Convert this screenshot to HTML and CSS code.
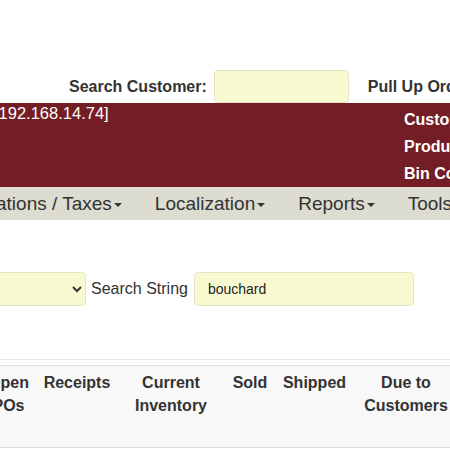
FILE: index.html
```html
<!DOCTYPE html>
<html>
<head>
<meta charset="utf-8">
<link rel="stylesheet" href="styles.css">
</head>
<body>
<div class="page">
  <div class="topbar">
    <label class="lbl" for="cust">Search Customer:</label>
    <input class="yinput cust" id="cust" type="text">
    <span class="lbl pull">Pull Up Order:</span>
  </div>
  <header class="brand">
    <div class="user">[192.168.14.74]</div>
    <ul class="quick">
      <li>Customers</li>
      <li>Products</li>
      <li>Bin Codes</li>
    </ul>
  </header>
  <nav class="mainnav">
    <ul>
      <li>Specifications / Taxes<span class="caret"></span></li>
      <li>Localization<span class="caret"></span></li>
      <li>Reports<span class="caret"></span></li>
      <li>Tools<span class="caret"></span></li>
    </ul>
  </nav>
  <form class="search">
    <select class="yinput field"><option></option></select>
    <label class="slabel">Search String</label>
    <input class="yinput sinput" type="text" value="bouchard">
  </form>
  <div class="results">
    <table class="grid">
      <colgroup>
        <col class="c1"><col class="c2"><col class="c3"><col class="c4"><col class="c5"><col class="c6"><col class="c7">
      </colgroup>
      <thead>
        <tr>
          <th>Open<br>POs</th>
          <th>Receipts</th>
          <th>Current<br>Inventory</th>
          <th>Sold</th>
          <th>Shipped</th>
          <th>Due to<br>Customers</th>
          <th>Other</th>
        </tr>
      </thead>
    </table>
  </div>
</div>
</body>
</html>
```
FILE: styles.css
```css
html, body {
  margin: 0;
  padding: 0;
  background: #fff;
}
body {
  width: 450px;
  height: 450px;
  overflow: hidden;
  font-family: "Liberation Sans", Arial, sans-serif;
  color: #333;
}
.page {
  width: 640px;
}
.topbar {
  height: 103px;
  display: flex;
  align-items: flex-end;
  padding-left: 69px;
  white-space: nowrap;
}
.lbl {
  font-weight: bold;
  font-size: 16px;
  line-height: 33px;
}
.yinput {
  box-sizing: border-box;
  background: #fafad2;
  border: 1px solid #e3e3c6;
  border-radius: 4px;
  font-family: "Liberation Sans", Arial, sans-serif;
  color: #333;
}
.cust {
  width: 135px;
  height: 33px;
  margin-left: 7px;
}
.pull {
  margin-left: 19px;
}
.brand {
  height: 84px;
  background: #731d24;
  color: #fff;
  display: flex;
}
.user {
  flex: 1;
  font-size: 16.5px;
  line-height: 20px;
  margin-left: -6px;
  white-space: nowrap;
}
.quick {
  list-style: none;
  margin: 0;
  padding: 3px 0 0;
  width: 236px;
  font-weight: bold;
  font-size: 16px;
  line-height: 27px;
  white-space: nowrap;
}
.mainnav {
  height: 33px;
  background: #dcdcd0;
}
.mainnav ul {
  list-style: none;
  margin: 0 0 0 -87px;
  padding: 0;
  display: flex;
  white-space: nowrap;
}
.mainnav li {
  padding: 0 16.5px;
  font-size: 19px;
  line-height: 33px;
  color: #333;
}
.caret {
  display: inline-block;
  width: 0;
  height: 0;
  margin-left: 2px;
  vertical-align: middle;
  border-top: 4px solid #333;
  border-left: 4px solid transparent;
  border-right: 4px solid transparent;
}
.search {
  margin: 52px 0 0;
  display: flex;
  align-items: center;
  white-space: nowrap;
}
.field {
  width: 200px;
  height: 34px;
  margin-left: -114px;
}
.slabel {
  font-size: 16px;
  margin-left: 5px;
}
.sinput {
  width: 220px;
  height: 34px;
  margin-left: 6px;
  padding-left: 13px;
  font-size: 14px;
  color: #222;
}
.results {
  margin-top: 53px;
  border-top: 1px solid #e6e6e6;
  padding-top: 5px;
}
.grid {
  border-collapse: collapse;
  table-layout: fixed;
  margin-left: -20px;
  width: 600px;
}
.c1 { width: 57px; }
.c2 { width: 80px; }
.c3 { width: 108px; }
.c4 { width: 50px; }
.c5 { width: 79px; }
.c6 { width: 104px; }
.c7 { width: 122px; }
.grid th {
  background: #f8f8f8;
  border-top: 1px solid #dcdcdc;
  border-bottom: 1px solid #dcdcdc;
  font-size: 16px;
  font-weight: bold;
  line-height: 22.85px;
  text-align: center;
  vertical-align: top;
  padding: 6px 0 29px;
  white-space: nowrap;
}
```
